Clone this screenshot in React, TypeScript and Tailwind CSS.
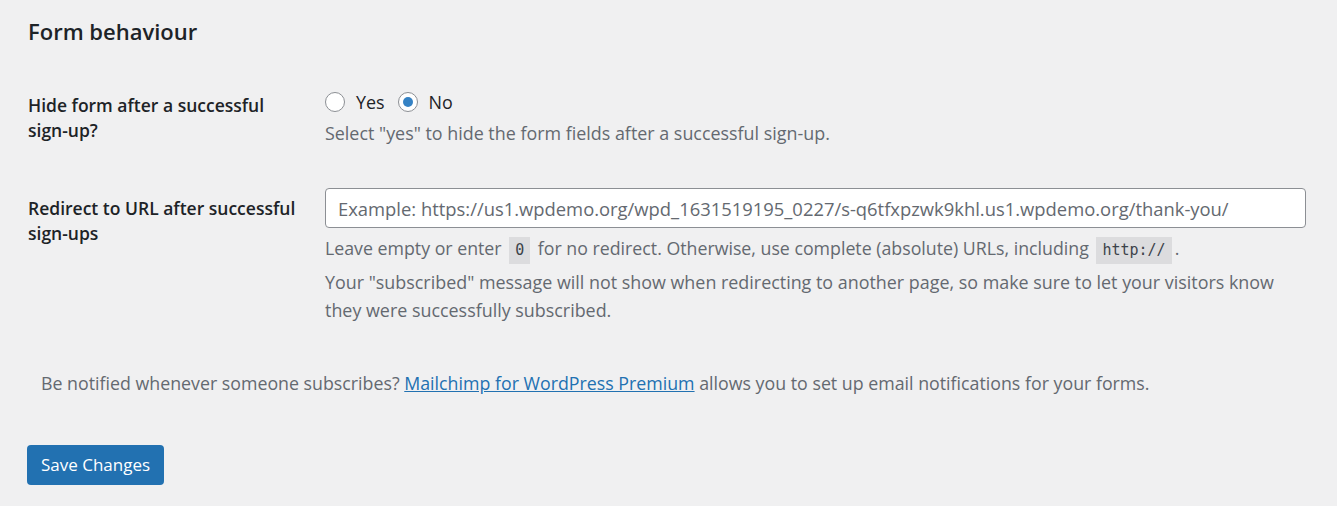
import React from "react";

function Radio({ checked, label }: { checked?: boolean; label: string }) {
  return (
    <label className="flex items-center gap-[11px] mr-[13px]">
      <span className="w-[20px] h-[20px] rounded-full border border-[#8c8f94] bg-white flex items-center justify-center">
        {checked && <span className="w-[10px] h-[10px] rounded-full bg-[#3582c4]" />}
      </span>
      <span className="text-[#1d2327]">{label}</span>
    </label>
  );
}

function Code({ children }: { children: React.ReactNode }) {
  return (
    <code className="inline-block bg-[#dcdcde] px-[6px] mx-[3px] leading-[27px] font-['DejaVu_Sans_Mono',monospace] text-[15px] text-[#3c434a]">
      {children}
    </code>
  );
}

export default function App() {
  return (
    <div className="min-h-screen bg-[#f0f0f1] pl-[28px] pr-[31px] font-['Open_Sans',sans-serif] text-[17.5px] text-[#1d2327]">
      <h2 className="pt-[17px] text-[22px] leading-[29px] font-semibold">Form behaviour</h2>

      {/* Hide form row */}
      <div className="grid grid-cols-[297px_1fr] mt-[44px]">
        <div className="pt-[3px] pr-[24px] font-semibold leading-[25px]">
          Hide form after a successful sign-up?
        </div>
        <div className="text-[17.9px]">
          <div className="flex items-center h-[24px]">
            <Radio label="Yes" />
            <Radio label="No" checked />
          </div>
          <p className="mt-[5px] leading-[28px] text-[#646970]">
            Select "yes" to hide the form fields after a successful sign-up.
          </p>
        </div>
      </div>

      {/* Redirect row */}
      <div className="grid grid-cols-[297px_1fr] mt-[41px]">
        <div className="pt-[8px] pr-[24px] font-semibold leading-[25px]">
          Redirect to URL after successful sign-ups
        </div>
        <div className="text-[17.9px]">
          <input
            type="text"
            placeholder="Example: https://us1.wpdemo.org/wpd_1631519195_0227/s-q6tfxpzwk9khl.us1.wpdemo.org/thank-you/"
            className="w-full h-[40px] px-[12px] bg-white border border-[#8c8f94] rounded-[4px] outline-none placeholder:text-[#646970] text-[18.4px]"
          />
          <p className="mt-[6px] leading-[28px] text-[17.75px] text-[#646970]">
            Leave empty or enter <Code>0</Code> for no redirect. Otherwise, use complete (absolute) URLs, including{" "}
            <Code>http://</Code>.
          </p>
          <p className="mt-[4px] leading-[28px] text-[#646970]">
            Your "subscribed" message will not show when redirecting to another page, so make sure to let your visitors know they were successfully subscribed.
          </p>
        </div>
      </div>

      <p className="mt-[45px] pl-[13px] leading-[28px] text-[17.8px] text-[#646970]">
        Be notified whenever someone subscribes?{" "}
        <a href="#" className="text-[#2271b1] underline">Mailchimp for WordPress Premium</a> allows you to set up email
        notifications for your forms.
      </p>

      <button className="mt-[48px] -ml-px h-[40px] px-[14px] rounded-[4px] bg-[#2271b1] text-white text-[17px]">
        Save Changes
      </button>
    </div>
  );
}
